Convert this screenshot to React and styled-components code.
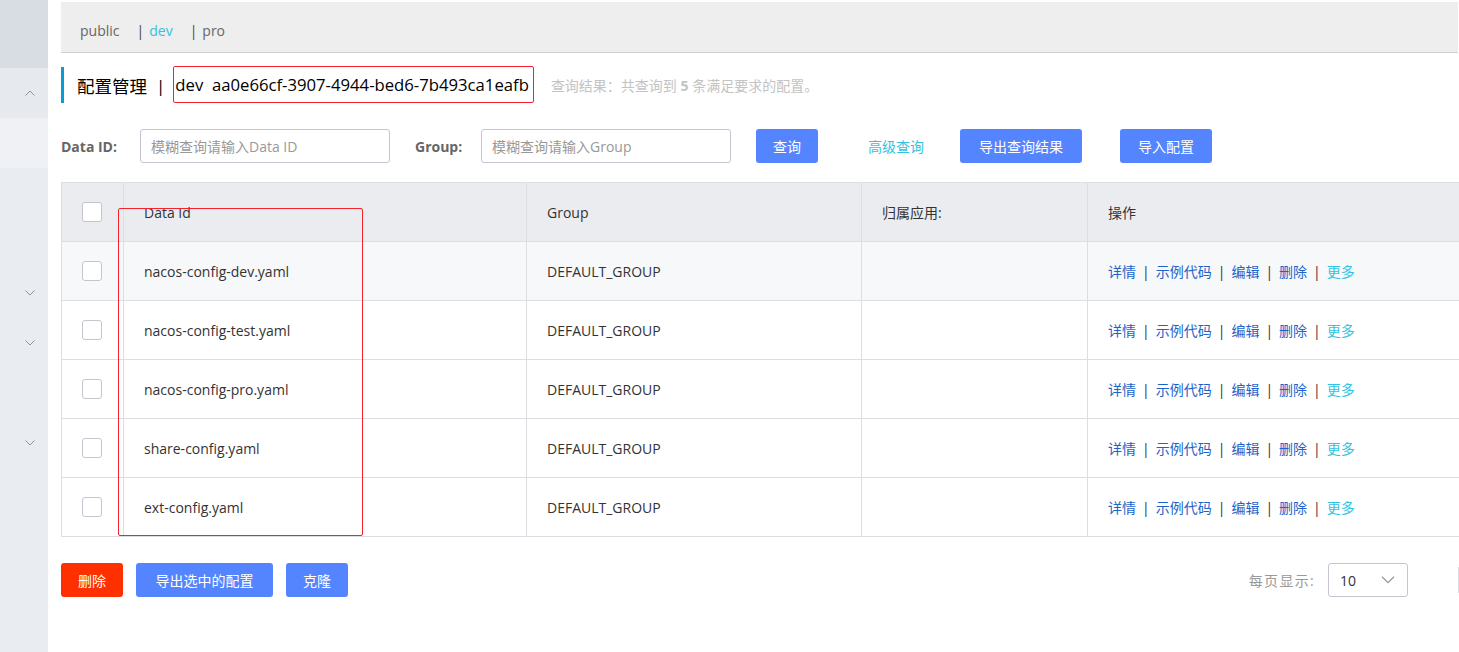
import React from "react";
import styled, { createGlobalStyle } from "styled-components";

const GlobalStyle = createGlobalStyle`
  html, body {
    margin: 0;
    padding: 0;
    background: #fff;
    overflow: hidden;
  }
  body {
    font-family: "Open Sans", "Noto Sans CJK SC", "Noto Sans", sans-serif;
    font-size: 14px;
    color: #333;
  }
  * { box-sizing: border-box; }
`;

const Page = styled.div`
  display: flex;
  width: 1459px;
  height: 652px;
  overflow: hidden;
`;

const Sidebar = styled.div`
  width: 48px;
  flex: 0 0 48px;
  background: #e9ecf1;
  display: flex;
  flex-direction: column;
`;

const SideHead = styled.div`
  height: 68px;
  background: #d8dce3;
`;

const SideItem = styled.div`
  height: 50px;
  display: flex;
  align-items: center;
  justify-content: flex-end;
  padding-right: 13px;
  background: ${(p) => (p.$active ? "#eff1f4" : p.$open ? "#e6e9ee" : "transparent")};
`;

const Main = styled.div`
  flex: 1;
  padding-left: 13px;
  min-width: 0;
  overflow: hidden;
`;

const TopBar = styled.div`
  margin-top: 2px;
  height: 51px;
  background: #eeeeee;
  border-bottom: 1px solid #cfcfcf;
  display: flex;
  align-items: center;
  padding: 6px 0 0 19px;
  margin-right: 1px;
`;

const Tab = styled.span`
  color: ${(p) => (p.$current ? "#33c3e0" : "#666")};
  margin-left: ${(p) => (p.$first ? "0" : "17px")};
  font-size: 14px;
`;

const TabBar = styled.span`
  color: #444;
  margin-right: 5px;
`;

const TitleRow = styled.div`
  margin-top: 14px;
  height: 36px;
  display: flex;
  align-items: center;
  border-left: 3px solid #0a9bd0;
  padding-left: 13px;
`;

const Title = styled.span`
  font-size: 17.5px;
  color: #000;
`;

const TitleSep = styled.span`
  font-size: 17px;
  color: #000;
  margin: 0 8px 0 9px;
`;

const IdBox = styled.span`
  height: 37px;
  margin-top: -1px;
  display: flex;
  align-items: center;
  padding: 0 4px 0 1px;
  border: 1px solid #f5222d;
  border-radius: 2px;
  font-size: 16.7px;
  color: #000;
  white-space: pre;
`;

const Summary = styled.span`
  margin-left: 17px;
  font-size: 14px;
  color: #c3c3c3;

  strong {
    font-weight: 700;
  }
`;

const SearchRow = styled.div`
  margin-top: 26px;
  height: 34px;
  display: flex;
  align-items: center;
`;

const Label = styled.span`
  font-weight: 700;
  color: #666;
  font-size: 14px;
  width: ${(p) => p.$w}px;
  margin-left: ${(p) => p.$gap || 0}px;
`;

const Input = styled.input`
  width: 250px;
  height: 34px;
  border: 1px solid #c4c6cf;
  border-radius: 3px;
  padding: 0 10px;
  font-family: inherit;
  font-size: 14px;
  color: #333;
  outline: none;

  &::placeholder {
    color: #999;
  }
`;

const Button = styled.button`
  height: 34px;
  width: ${(p) => p.$w}px;
  margin-left: ${(p) => p.$gap || 0}px;
  border: none;
  border-radius: 3px;
  background: ${(p) => (p.$danger ? "#ff3000" : "#5584ff")};
  color: #fff;
  font-family: inherit;
  font-size: 14px;
  padding: 0;
  cursor: pointer;
`;

const TextButton = styled.span`
  margin-left: ${(p) => p.$gap}px;
  width: 60px;
  color: #33c3e0;
  font-size: 14px;
  cursor: pointer;
`;

const TableWrap = styled.div`
  position: relative;
  margin-top: 19px;
  width: calc(100% + 60px);
  border-top: 1px solid #dcdee3;
  border-left: 1px solid #dcdee3;
`;

const Row = styled.div`
  display: grid;
  grid-template-columns: 61px 403px 335px 226px 1fr;
  height: 59px;
  border-bottom: 1px solid #dcdee3;
  background: ${(p) => (p.$head ? "#ebecf0" : p.$hover ? "#f7f8fa" : "#fff")};
`;

const Cell = styled.div`
  display: flex;
  align-items: center;
  padding-left: 20px;
  border-left: ${(p) => (p.$check ? "none" : "1px solid #dcdee3")};
  color: #333;
  font-size: 14px;
  white-space: nowrap;
`;

const Checkbox = styled.span`
  width: 20px;
  height: 20px;
  border: 1px solid #c4c6cf;
  border-radius: 3px;
  background: #fff;
  display: inline-block;
`;

const Link = styled.a`
  color: ${(p) => (p.$more ? "#33c3e0" : "#1d63c8")};
  text-decoration: none;
  cursor: pointer;
`;

const Sep = styled.span`
  color: #333;
  margin: 0 6px;
`;

const Highlight = styled.div`
  position: absolute;
  left: 56px;
  top: 25px;
  width: 245px;
  height: 328px;
  border: 1px solid #f5222d;
  border-radius: 2px;
  pointer-events: none;
`;

const BottomRow = styled.div`
  margin-top: 26px;
  height: 34px;
  display: flex;
  align-items: center;
`;

const Pagination = styled.div`
  margin-left: auto;
  display: flex;
  align-items: center;
`;

const PageLabel = styled.span`
  color: #999;
  font-size: 14px;
  letter-spacing: 1.3px;
  margin-right: 13px;
`;

const Select = styled.div`
  width: 80px;
  height: 34px;
  border: 1px solid #c4c6cf;
  border-radius: 3px;
  display: flex;
  align-items: center;
  justify-content: space-between;
  padding: 0 12px 0 11px;
  color: #333;
  font-size: 14px;
`;

const PagerEdge = styled.div`
  margin-left: 50px;
  width: 1px;
  height: 26px;
  border-left: 1px solid #dcdee3;
`;

const Chevron = ({ up, color = "#8c939d", w = 10, h = 6 }) => (
  <svg width={w} height={h} viewBox="0 0 10 6" fill="none">
    <polyline
      points={up ? "0.5,5.5 5,1 9.5,5.5" : "0.5,0.5 5,5 9.5,0.5"}
      stroke={color}
      strokeWidth="1"
    />
  </svg>
);

const sideItems = [
  { open: true, icon: "up" },
  { active: true },
  {},
  {},
  { icon: "down" },
  { icon: "down" },
  {},
  { icon: "down" },
  {},
  {},
  {},
];

const configs = [
  "nacos-config-dev.yaml",
  "nacos-config-test.yaml",
  "nacos-config-pro.yaml",
  "share-config.yaml",
  "ext-config.yaml",
];

const actions = ["详情", "示例代码", "编辑", "删除"];

export default function App() {
  return (
    <>
      <GlobalStyle />
      <Page>
        <Sidebar>
          <SideHead />
          {sideItems.map((it, i) => (
            <SideItem key={i} $open={it.open} $active={it.active}>
              {it.icon && <Chevron up={it.icon === "up"} />}
            </SideItem>
          ))}
        </Sidebar>

        <Main>
          <TopBar>
            <Tab $first>public</Tab>
            <Tab $current>
              <TabBar>|</TabBar>dev
            </Tab>
            <Tab>
              <TabBar>|</TabBar>pro
            </Tab>
          </TopBar>

          <TitleRow>
            <Title>配置管理</Title>
            <TitleSep>|</TitleSep>
            <IdBox>dev  aa0e66cf-3907-4944-bed6-7b493ca1eafb</IdBox>
            <Summary>
              查询结果：共查询到 <strong>5</strong> 条满足要求的配置。
            </Summary>
          </TitleRow>

          <SearchRow>
            <Label $w={79}>Data ID:</Label>
            <Input placeholder="模糊查询请输入Data ID" />
            <Label $w={66} $gap={25}>
              Group:
            </Label>
            <Input placeholder="模糊查询请输入Group" />
            <Button $w={62} $gap={25}>
              查询
            </Button>
            <TextButton $gap={50}>高级查询</TextButton>
            <Button $w={122} $gap={32}>
              导出查询结果
            </Button>
            <Button $w={92} $gap={38}>
              导入配置
            </Button>
          </SearchRow>

          <TableWrap>
            <Row $head>
              <Cell $check>
                <Checkbox />
              </Cell>
              <Cell>Data Id</Cell>
              <Cell>Group</Cell>
              <Cell>归属应用:</Cell>
              <Cell>操作</Cell>
            </Row>
            {configs.map((name, i) => (
              <Row key={name} $hover={i === 0}>
                <Cell $check>
                  <Checkbox />
                </Cell>
                <Cell>{name}</Cell>
                <Cell>DEFAULT_GROUP</Cell>
                <Cell />
                <Cell>
                  {actions.map((a) => (
                    <React.Fragment key={a}>
                      <Link>{a}</Link>
                      <Sep>|</Sep>
                    </React.Fragment>
                  ))}
                  <Link $more>更多</Link>
                </Cell>
              </Row>
            ))}
            <Highlight />
          </TableWrap>

          <BottomRow>
            <Button $w={62} $danger>
              删除
            </Button>
            <Button $w={137} $gap={13}>
              导出选中的配置
            </Button>
            <Button $w={62} $gap={13}>
              克隆
            </Button>
            <Pagination>
              <PageLabel>每页显示:</PageLabel>
              <Select>
                <span>10</span>
                <Chevron color="#999" w={14} h={8} />
              </Select>
              <PagerEdge />
            </Pagination>
          </BottomRow>
        </Main>
      </Page>
    </>
  );
}
